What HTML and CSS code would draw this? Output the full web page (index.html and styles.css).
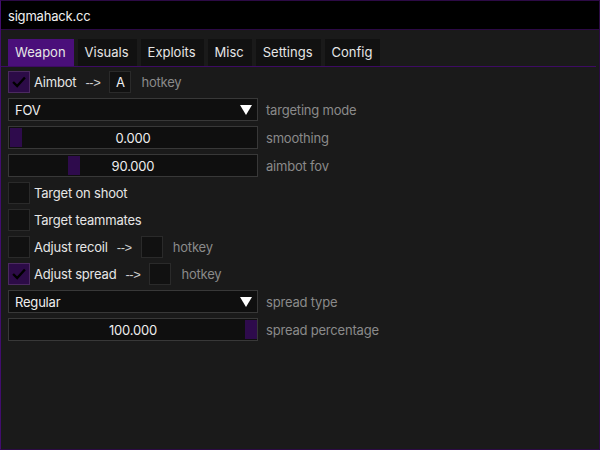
FILE: index.html
```html
<!DOCTYPE html>
<html>
<head>
<meta charset="utf-8">
<link rel="stylesheet" href="styles.css">
</head>
<body>
<div class="window">
  <div class="titlebar">sigmahack.cc</div>
  <div class="content">
    <div class="tabs">
      <div class="tab active">Weapon</div>
      <div class="tab">Visuals</div>
      <div class="tab">Exploits</div>
      <div class="tab">Misc</div>
      <div class="tab">Settings</div>
      <div class="tab">Config</div>
    </div>
    <div class="rows">
      <div class="row">
        <div class="check on"><svg viewBox="0 0 22 22" width="20" height="20"><polyline points="4.5,11 9,15.5 17.5,6" fill="none" stroke="#000" stroke-width="2.6"/></svg></div>
        <span class="text">Aimbot</span>
        <span class="arrow">--&gt;</span>
        <div class="key">A</div>
        <span class="label">hotkey</span>
      </div>
      <div class="row">
        <div class="frame combo"><span>FOV</span><svg viewBox="0 0 12 10" width="12" height="10"><polygon points="0,0 12,0 6,10" fill="#fff"/></svg></div>
        <span class="label">targeting mode</span>
      </div>
      <div class="row">
        <div class="frame slider"><div class="grab" style="left:1px"></div><span>0.000</span></div>
        <span class="label">smoothing</span>
      </div>
      <div class="row">
        <div class="frame slider"><div class="grab" style="left:59px"></div><span>90.000</span></div>
        <span class="label">aimbot fov</span>
      </div>
      <div class="row">
        <div class="check"></div>
        <span class="text">Target on shoot</span>
      </div>
      <div class="row">
        <div class="check"></div>
        <span class="text">Target teammates</span>
      </div>
      <div class="row">
        <div class="check"></div>
        <span class="text">Adjust recoil</span>
        <span class="arrow">--&gt;</span>
        <div class="key"></div>
        <span class="label">hotkey</span>
      </div>
      <div class="row">
        <div class="check on"><svg viewBox="0 0 22 22" width="20" height="20"><polyline points="4.5,11 9,15.5 17.5,6" fill="none" stroke="#000" stroke-width="2.6"/></svg></div>
        <span class="text">Adjust spread</span>
        <span class="arrow">--&gt;</span>
        <div class="key"></div>
        <span class="label">hotkey</span>
      </div>
      <div class="row">
        <div class="frame combo"><span>Regular</span><svg viewBox="0 0 12 10" width="12" height="10"><polygon points="0,0 12,0 6,10" fill="#fff"/></svg></div>
        <span class="label">spread type</span>
      </div>
      <div class="row">
        <div class="frame slider"><div class="grab" style="left:236px"></div><span>100.000</span></div>
        <span class="label">spread percentage</span>
      </div>
    </div>
  </div>
</div>
</body>
</html>
```
FILE: styles.css
```css
* { box-sizing: border-box; }
html, body {
  margin: 0;
  padding: 0;
  width: 600px;
  height: 450px;
  background: #1a1a1a;
  overflow: hidden;
}
body {
  font-family: Inter, "Noto Sans", sans-serif;
  font-size: 13px;
  letter-spacing: -0.2px;
  color: #e6e6e6;
  font-variant-ligatures: none;
  font-feature-settings: "calt" 0, "liga" 0;
}
.window {
  width: 600px;
  height: 450px;
  border: 1px solid #2c0a45;
  border-left-color: #420d6e;
  display: flex;
  flex-direction: column;
}
.titlebar {
  height: 29px;
  background: #000;
  border-bottom: 1px solid #2c0a45;
  padding-left: 7px;
  line-height: 30px;
  font-size: 13px;
  color: #f0f0f0;
  flex: none;
}
.content {
  flex: 1;
  padding: 9px 3px 0 7px;
}
.tabs {
  display: flex;
  gap: 4px;
  height: 28px;
  border-bottom: 1px solid #3d0b63;
  margin-left: -7px;
  padding-left: 7px;
}
.tab {
  height: 27px;
  padding: 0 8px 0 7px;
  line-height: 27px;
  letter-spacing: 0;
  background: #111111;
  color: #e6e6e6;
}
.tab.active {
  background: #4a0f7a;
}
.rows {
  display: flex;
  flex-direction: column;
  gap: 5px;
  padding-top: 4px;
}
.row {
  display: flex;
  align-items: center;
  height: 22px;
}
.row:has(.frame) { height: 23px; }
.check {
  width: 22px;
  height: 22px;
  border: 1px solid #2a2a2a;
  background: #111;
  flex: none;
  display: flex;
  align-items: center;
  justify-content: center;
}
.check.on {
  background: #2c0b47;
  border-color: #4b2a60;
}
.text {
  margin-left: 4px;
  color: #e6e6e6;
}
.arrow {
  margin-left: 9px;
  font-family: "Liberation Sans", sans-serif;
  letter-spacing: -0.4px;
  color: #d0d0d0;
}
.key {
  width: 22px;
  height: 22px;
  margin-left: 9px;
  background: #111;
  border: 1px solid #2a2a2a;
  display: flex;
  align-items: center;
  justify-content: center;
  color: #eee;
}
.label {
  margin-left: 10px;
  color: #8a8a8a;
}
.frame {
  width: 250px;
  height: 23px;
  background: #0f0f0f;
  border: 1px solid #383838;
  position: relative;
  flex: none;
  color: #eee;
}
.frame + .label { margin-left: 8px; }
.combo {
  display: flex;
  align-items: center;
  justify-content: space-between;
  padding: 0 5px 0 6px;
}
.slider {
  display: flex;
  align-items: center;
  justify-content: center;
}
.slider span { position: relative; }
.grab {
  position: absolute;
  top: 1px;
  bottom: 1px;
  width: 12px;
  background: #2e0b4c;
}
```
